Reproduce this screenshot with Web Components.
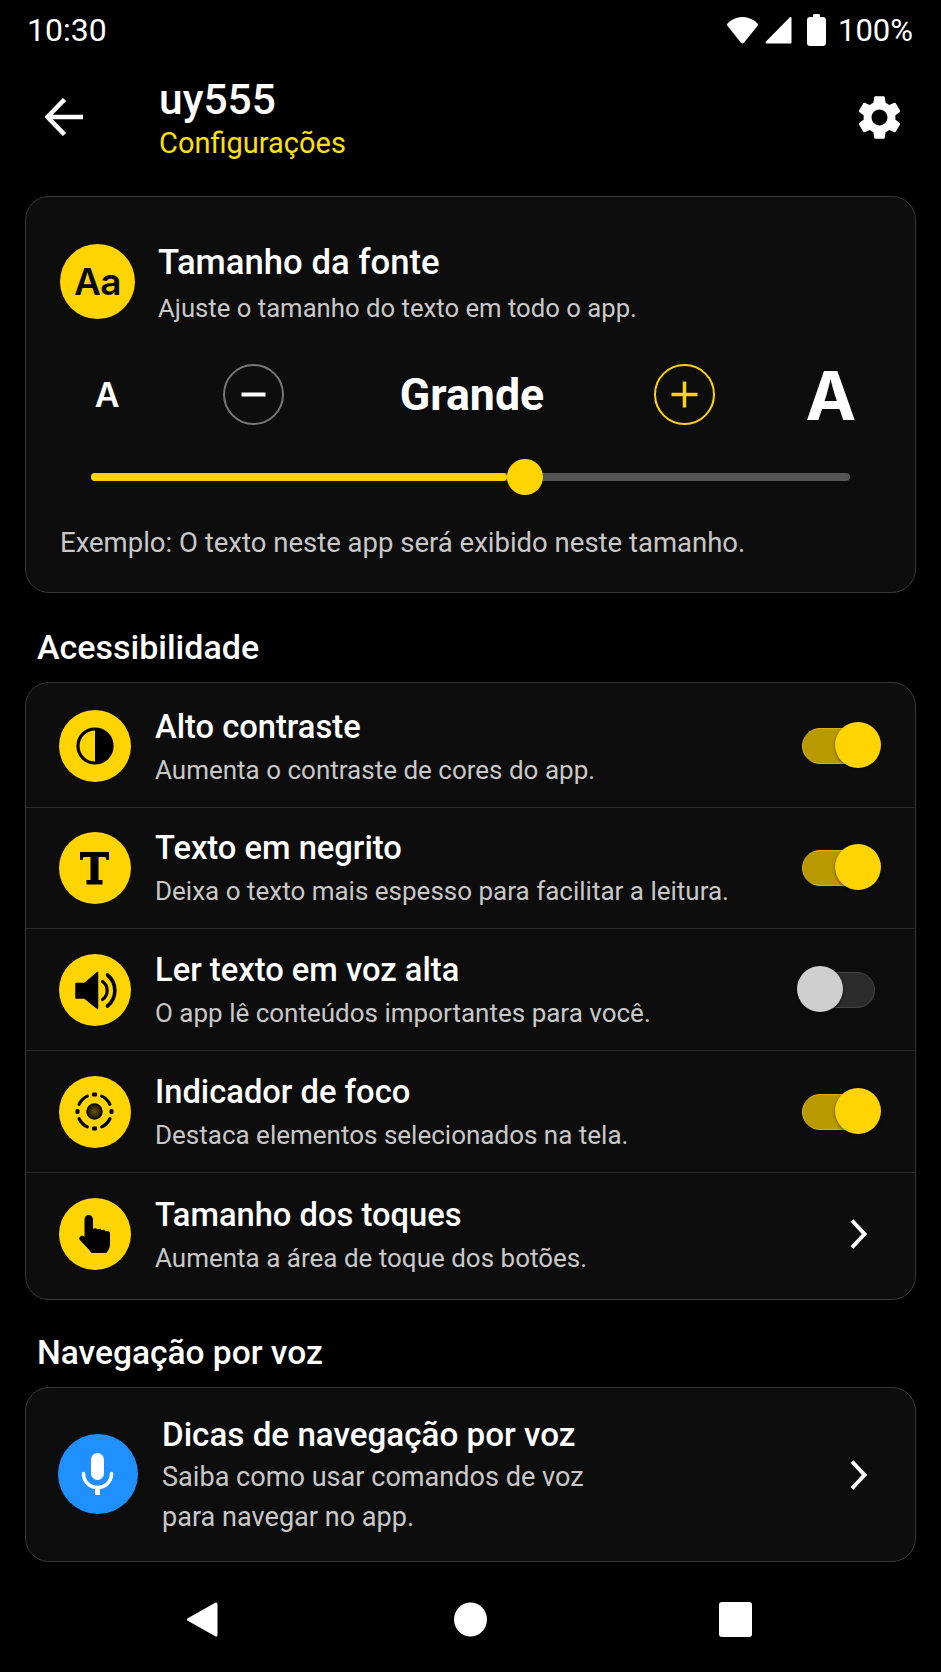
<!DOCTYPE html>
<html lang="pt-BR"><head><meta charset="utf-8"><title>uy555</title>
<style>
html,body{margin:0;padding:0;background:#000;}
body{width:941px;height:1672px;overflow:hidden;font-family:Roboto,"Liberation Sans",sans-serif;color:#fff;display:flex;flex-direction:column;}
</style></head><body>
<status-bar></status-bar>
<app-header title-text="uy555" subtitle="Configurações"></app-header>
<font-size-card></font-size-card>
<section-title style="height:89px;--pad:18px">Acessibilidade</section-title>
<settings-card>
  <setting-row style="--h:125px;--shift:2px;--ts:4px" heading="Alto contraste" desc="Aumenta o contraste de cores do app.">
    <svg slot="icon" viewBox="0 0 72 72"><circle cx="36" cy="36" r="17" fill="none" stroke="#000" stroke-width="3.2"/><path d="M36 19a17 17 0 0 1 0 34z" fill="#000"/></svg>
    <toggle-switch slot="control" on></toggle-switch>
  </setting-row>
  <setting-row style="--h:121px;--shift:0px;--ts:1px" heading="Texto em negrito" desc="Deixa o texto mais espesso para facilitar a leitura.">
    <svg slot="icon" viewBox="0 0 72 72"><path d="M21 20h29v8h-2.500l-1-3H39.500v23h4v4.500h-16V48h4V25H24.500l-1 3H21z" fill="#000"/></svg>
    <toggle-switch slot="control" on></toggle-switch>
  </setting-row>
  <setting-row style="--h:122px;--shift:0px;--ts:2px" heading="Ler texto em voz alta" desc="O app lê conteúdos importantes para você.">
    <svg slot="icon" viewBox="0 0 72 72"><path d="M17 29.500h8.500L38.500 18.500v36L25.500 44H17z" fill="#000" stroke="#000" stroke-width="1.500" stroke-linejoin="round"/><path d="M43.500 27.500a11 11 0 0 1 0 18" fill="none" stroke="#000" stroke-width="3.200" stroke-linecap="round"/><path d="M48.500 21a20 20 0 0 1 0 31" fill="none" stroke="#000" stroke-width="3.600" stroke-linecap="round"/></svg>
    <toggle-switch slot="control" off></toggle-switch>
  </setting-row>
  <setting-row style="--h:122px;--shift:0px;--ts:2px" heading="Indicador de foco" desc="Destaca elementos selecionados na tela.">
    <svg slot="icon" viewBox="0 0 72 72"><defs><radialGradient id="fc"><stop offset="0" stop-color="#6a5000"/><stop offset="1" stop-color="#1a1400"/></radialGradient></defs><circle cx="35.500" cy="35.500" r="7.500" fill="url(#fc)" stroke="#000" stroke-width="1.500"/>
    <g fill="none" stroke="#000" stroke-width="3.200" stroke-linecap="round" transform="translate(35.500 35.500)"><path d="M15.400 7.200A17 17 0 0 1 7.200 15.400"/><path d="M-7.200 15.400A17 17 0 0 1 -15.400 7.200"/><path d="M-15.400 -7.200A17 17 0 0 1 -7.200 -15.400"/><path d="M7.200 -15.400A17 17 0 0 1 15.400 -7.200"/></g>
    <g fill="#000"><rect x="33" y="16.500" width="5" height="4" rx="1.200"/><rect x="33" y="50.500" width="5" height="4" rx="1.200"/><rect x="16.500" y="33" width="4" height="5" rx="1.500"/><rect x="50.500" y="33" width="4" height="5" rx="1.500"/></g></svg>
    <toggle-switch slot="control" on></toggle-switch>
  </setting-row>
  <setting-row style="--h:125px;--shift:-4px;--ts:-1px" heading="Tamanho dos toques" desc="Aumenta a área de toque dos botões.">
    <svg slot="icon" viewBox="0 0 72 72"><path d="M29.500 17c2.600 0 4.500 1.900 4.500 4.500V31c.8-1 3.600-1.100 4.300.6.900-1.300 3.700-1.300 4.400.7 1-1.200 3.700-.7 4 1.100.9-.8 4.300-.4 4.300 1.800V46c0 4-1.800 7-3.800 9H32.500c-1.800-3-9-10-12-13.500-1-1.400 1.200-4.900 3.800-3.500l1.200 1V21.500c0-2.500 1.900-4.500 4-4.500z" fill="#000"/></svg>
    <chevron-icon slot="control" style="margin-right:12.500px"></chevron-icon>
  </setting-row>
</settings-card>
<section-title style="height:87px;--pad:19px;--fs:33.500px">Navegação por voz</section-title>
<voice-card heading="Dicas de navegação por voz">Saiba como usar comandos de voz<br>para navegar no app.</voice-card>
<nav-bar></nav-bar>
<script>
function def(name, css, html){
  customElements.define(name, class extends HTMLElement{
    constructor(){super();const r=this.attachShadow({mode:'open'});const t=document.createElement('template');t.innerHTML='<style>'+css+'</style>'+(typeof html==='function'?html(this):html);r.appendChild(t.content.cloneNode(true));}
  });
}
const gear='M19.14 12.94c.04-.3.06-.61.06-.94 0-.32-.02-.64-.07-.94l2.03-1.58c.18-.14.23-.41.12-.61l-1.92-3.32c-.12-.22-.37-.29-.59-.22l-2.39.96c-.5-.38-1.03-.7-1.62-.94l-.36-2.54c-.04-.24-.24-.41-.48-.41h-3.84c-.24 0-.43.17-.47.41l-.36 2.54c-.59.24-1.13.57-1.62.94l-2.39-.96c-.22-.08-.47 0-.59.22L2.74 8.87c-.12.21-.08.47.12.61l2.03 1.58c-.05.3-.09.63-.09.94s.02.64.07.94l-2.03 1.58c-.18.14-.23.41-.12.61l1.92 3.32c.12.22.37.29.59.22l2.39-.96c.5.38 1.03.7 1.62.94l.36 2.54c.05.24.24.41.48.41h3.84c.24 0 .44-.17.47-.41l.36-2.54c.59-.24 1.13-.56 1.62-.94l2.39.96c.22.08.47 0 .59-.22l1.92-3.32c.12-.22.07-.47-.12-.61l-2.01-1.58zM12 15.6c-1.98 0-3.6-1.62-3.6-3.6s1.62-3.6 3.6-3.6 3.6 1.62 3.6 3.6-1.62 3.6-3.6 3.6z';

def('status-bar',`
:host{display:flex;align-items:center;height:60px;padding:0 28px 0 27px;flex:none;font:400 31px/1 Roboto,sans-serif;color:#fff;}
.time{font-size:32px}
.sp{flex:1}
svg{display:block}
`,`<span class="time">10:30</span><span class="sp"></span>
<svg width="33" height="28" viewBox="0 0 33 28" style="margin-right:6px"><path d="M1 8.500C1 7 8 1 16.500 1S32 7 32 8.500c0 .6-.3 1.100-.6 1.500L18 26.800c-.8 1-2.200 1-3 0L1.600 10C1.300 9.600 1 9.100 1 8.500z" fill="#fff"/></svg>
<svg width="27" height="28" viewBox="0 0 27 28" style="margin-right:15px"><path d="M25.500 2v24.500H1.500z" fill="#fff" stroke="#fff" stroke-width="2" stroke-linejoin="round"/></svg>
<svg width="19" height="32" viewBox="0 0 19 32" style="margin-right:12px"><path d="M6 1.500C6 .6 6.600 0 7.500 0h4c.9 0 1.500.6 1.500 1.500V3h3c1.700 0 3 1.300 3 3v23c0 1.700-1.300 3-3 3H3c-1.700 0-3-1.300-3-3V6c0-1.700 1.300-3 3-3h3z" fill="#fff"/></svg>
<span>100%</span>`);

def('app-header',`
:host{display:flex;align-items:flex-start;height:136px;flex:none;box-sizing:border-box;padding:0 35px 0 45px;}
.back{width:38px;height:38px;margin-top:38px;margin-right:76px;flex:none;display:block}
.t{flex:1;min-width:0;padding-top:18px}
.a{font:500 42.500px/44px Roboto,sans-serif;color:#fff;}
.b{font:400 29px/36px Roboto,sans-serif;color:#ffe000;margin-top:3px}
.g{width:53px;height:53px;margin-top:30.500px;flex:none;display:block}
`,e=>`<svg class="back" viewBox="0 0 38 38" fill="none" stroke="#fff" stroke-width="4.500"><path d="M38 19H3"/><path d="M19.500 1.500 2.500 19l17 17.500"/></svg>
<div class="t"><div class="a">${e.getAttribute('title-text')}</div><div class="b">${e.getAttribute('subtitle')}</div></div>
<svg class="g" viewBox="0 0 24 24"><path d="${gear}" fill="#fff"/></svg>`);

def('font-size-card',`
:host{display:block;margin:0 25px;height:397px;box-sizing:border-box;flex:none;background:#0d0d0d;border:1.500px solid #383838;border-radius:24px;font-family:Roboto,sans-serif;}
.top{display:flex;padding:47px 0 0 34px;}
.av{width:75px;height:75px;border-radius:50%;background:#ffd400;display:flex;align-items:center;justify-content:center;color:#0a0a0a;font:600 37px/1 Inter,Roboto,sans-serif;flex:none;margin-right:23px;letter-spacing:-.5px}
.h{font:500 34.700px/40px Roboto,sans-serif;color:#fff;margin-top:-2px}
.d{font:400 25.700px/34px Roboto,sans-serif;color:#c9c9c9;margin-top:9px}
.row{display:grid;grid-template-columns:134px 158px 280px 144px 150px;margin:35.500px 0 0 14px;align-items:center;justify-items:center;height:62px}
.sa{font:600 34px/1 Inter,Roboto,sans-serif;color:#fff;}
.la{font:700 68px/1 Inter,Roboto,sans-serif;color:#fff;}
.g{font:700 44.700px/1 Roboto,sans-serif;color:#fff;padding-top:2px}
.btn{width:61px;height:61px;box-sizing:border-box;border-radius:50%;border:2px solid #777;display:block}
.btn.y{border-color:#ffd400}
.sl{position:relative;height:8px;margin:50.500px 0 0 65px;width:759px;border-radius:4px;background:#555;}
.fill{height:8px;width:416px;background:#ffd400;border-radius:4px}
.knob{position:absolute;left:416px;top:-14px;width:36px;height:36px;border-radius:50%;background:#ffd400}
.ex{font:400 27.500px/36px Roboto,sans-serif;color:#c8c8c8;margin:44px 0 0 34px}
`,`<div class="top"><div class="av">Aa</div><div><div class="h">Tamanho da fonte</div><div class="d">Ajuste o tamanho do texto em todo o app.</div></div></div>
<div class="row"><span class="sa">A</span>
<svg class="btn" viewBox="0 0 57 57"><path d="M16.500 28.500h24" stroke="#fff" stroke-width="4"/></svg>
<span class="g">Grande</span>
<svg class="btn y" viewBox="0 0 57 57"><path d="M15.500 28.500h26M28.500 15.500v26" stroke="#ffd400" stroke-width="3.500"/></svg>
<span class="la">A</span></div>
<div class="sl"><div class="fill"></div><div class="knob"></div></div>
<div class="ex">Exemplo: O texto neste app será exibido neste tamanho.</div>`);

def('section-title',`
:host{display:flex;align-items:center;flex:none;padding:var(--pad,6px) 0 0 37px;box-sizing:border-box;font:500 var(--fs,34px)/1 Roboto,sans-serif;color:#fff;}
`,`<slot></slot>`);

def('settings-card',`
:host{display:block;margin:0 25px;flex:none;height:618px;box-sizing:border-box;background:#0d0d0d;border:1.500px solid #383838;border-radius:24px;overflow:hidden}
::slotted(setting-row:not(:last-child)){border-bottom:1.500px solid #2a2a2a}
`,`<slot></slot>`);

def('setting-row',`
:host{display:flex;align-items:center;height:var(--h);box-sizing:border-box;padding:0 32px 0 33px;}
.ic{width:72px;height:72px;border-radius:50%;background:#ffd400;flex:none;margin-right:24px;margin-top:var(--shift);display:block;}
::slotted(svg){width:72px;height:72px;display:block}
::slotted(toggle-switch),::slotted(chevron-icon){margin-top:var(--shift)}
.t{flex:1;min-width:0;margin-top:var(--ts)}
.h{font:500 32.700px/40px Roboto,sans-serif;color:#fff}
.d{font:400 26px/36px Roboto,sans-serif;color:#c8c8c8;margin-top:5px}
`,e=>`<div class="ic"><slot name="icon"></slot></div><div class="t"><div class="h">${e.getAttribute('heading')}</div><div class="d">${e.getAttribute('desc')}</div></div><slot name="control"></slot>`);

def('toggle-switch',`
:host{display:block;position:relative;width:78px;height:48px;flex:none;margin-right:3px}
.tr{position:absolute;left:0;top:6px;width:73px;height:36px;border-radius:18px;box-sizing:border-box;background:#b89900;border:1.500px solid #d8b400}
.kn{position:absolute;left:33px;top:0;width:46px;height:46px;border-radius:50%;background:#ffd400;box-shadow:0 1px 3px #0008}
:host([off]) .tr{background:#2c2c2c;border-color:#444;}
:host([off]) .kn{left:-5px;background:#cfcfcf;}
`,`<div class="tr"></div><div class="kn"></div>`);

def('chevron-icon',`
:host{display:block;width:22px;height:30px;flex:none}
svg{display:block}
`,`<svg width="22" height="30" viewBox="0 0 22 30" fill="none" stroke="#fff" stroke-width="4"><path d="M3 1.500 15.500 15 3 28.500"/></svg>`);

def('voice-card',`
:host{display:flex;align-items:center;margin:0 25px;height:175px;box-sizing:border-box;flex:none;background:#0d0d0d;border:1.500px solid #383838;border-radius:24px;padding:0 44.500px 0 32px}
.ic{width:80px;height:80px;border-radius:50%;background:#2090ff;flex:none;margin-right:24px;display:block;margin-top:-2px}
.ic svg{display:block}
.t{flex:1;margin-top:3px}
.h{font:500 33.200px/40px Roboto,sans-serif;color:#fff}
.d{font:400 27.100px/40.500px Roboto,sans-serif;color:#c8c8c8;margin-top:2px}
`,e=>`<div class="ic"><svg width="80" height="80" viewBox="0 0 80 80"><rect x="33" y="19" width="13" height="27" rx="6.500" fill="#fff"/><path d="M25.500 39.500c0 8 6 14 14 14s14-6 14-14" fill="none" stroke="#fff" stroke-width="3.500" stroke-linecap="round"/><path d="M39.500 53v8" stroke="#fff" stroke-width="5"/></svg></div><div class="t"><div class="h">${e.getAttribute('heading')}</div><div class="d"><slot></slot></div></div><chevron-icon></chevron-icon>`);

def('nav-bar',`
:host{display:flex;flex:1;align-items:flex-start;padding:40px 0 0 186px;box-sizing:border-box;}
svg{display:block}
`,`<svg width="33" height="35" viewBox="0 0 33 35" style="margin-right:235px"><path d="M30 2 2.500 17.500 30 33z" fill="#fff" stroke="#fff" stroke-width="3" stroke-linejoin="round"/></svg>
<svg width="33" height="35" viewBox="0 0 33 35" style="margin-right:232px"><ellipse cx="16.500" cy="17.500" rx="16.500" ry="17" fill="#fff"/></svg>
<svg width="33" height="35" viewBox="0 0 33 35"><rect x="0" y="0" width="33" height="35" rx="3" fill="#fff"/></svg>`);
</script>
</body></html>
